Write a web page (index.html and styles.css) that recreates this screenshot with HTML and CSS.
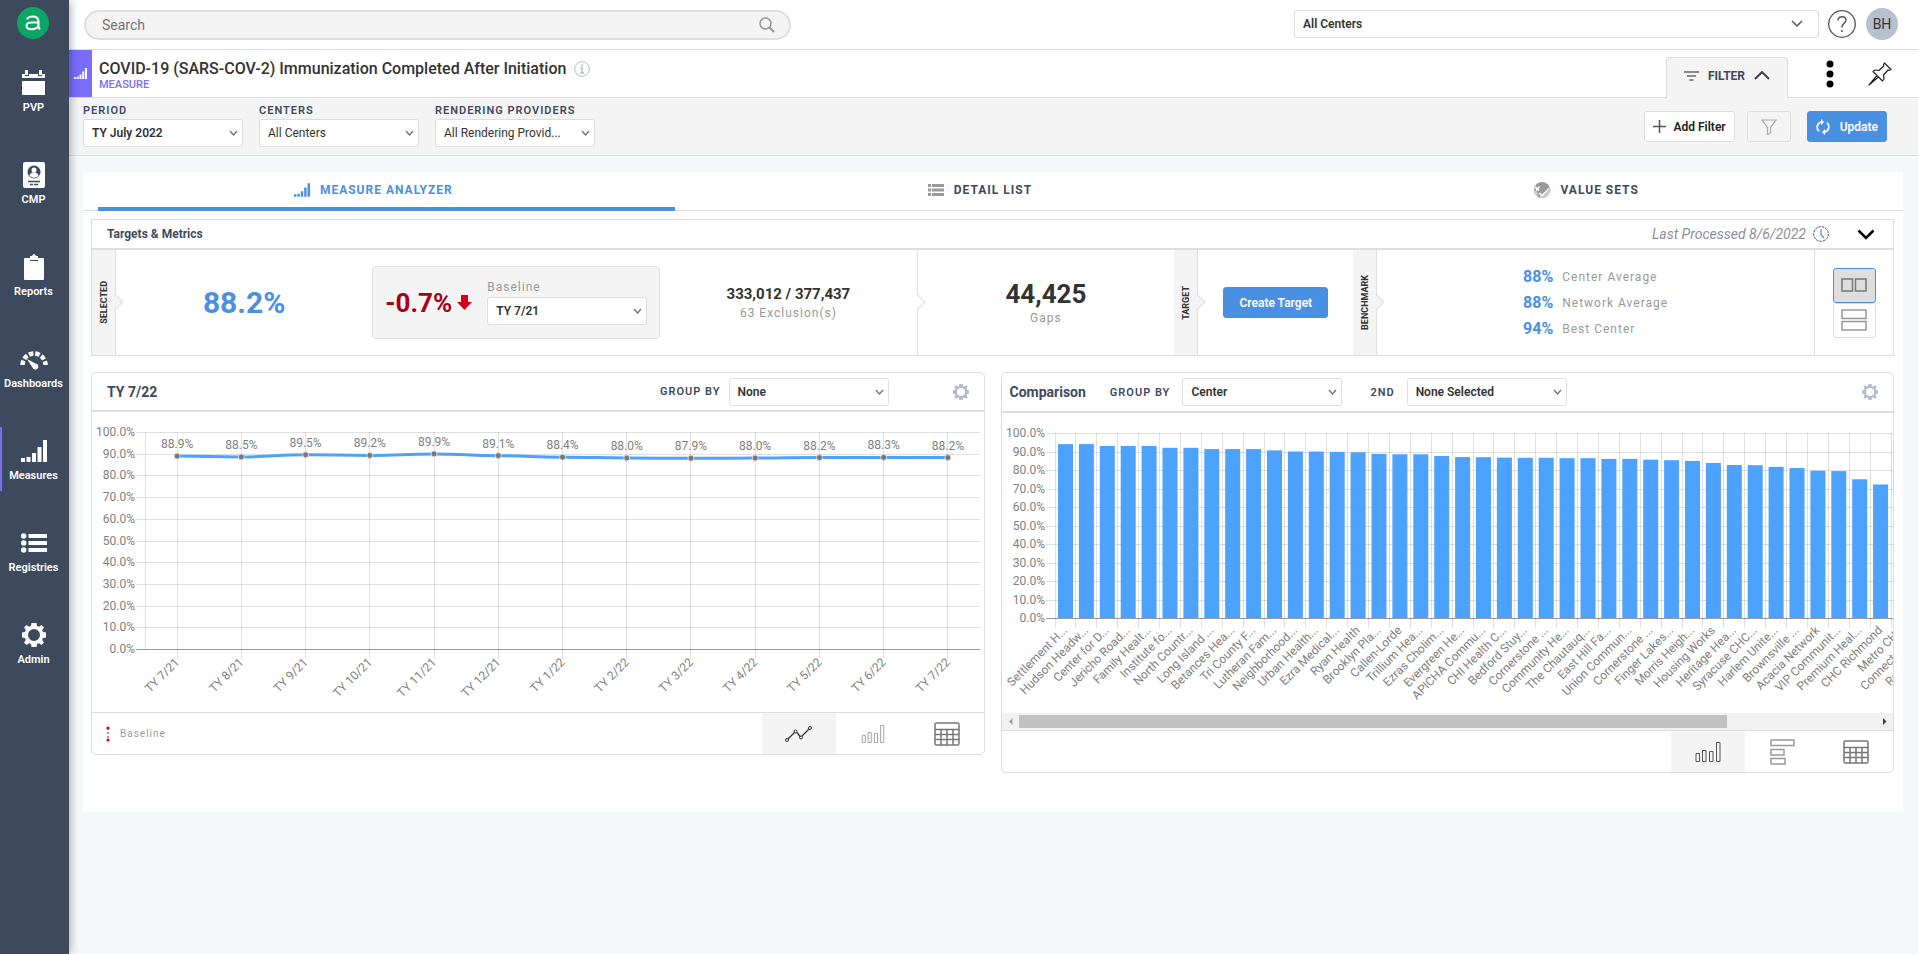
FILE: index.html
```html
<!DOCTYPE html>
<html lang="en">
    <head>
        <meta charset="utf-8">
        <title>COVID-19 (SARS-COV-2) Immunization Completed After Initiation</title>
        <link rel="stylesheet" href="styles.css">
    </head>
    <body>
        <svg class="defs" width="0" height="0" aria-hidden="true">
            <symbol id="bars" viewBox="0 0 26 22">
                <path d="M0 18h4v4H0zM5.500 17h4v5h-4zM11 13h4v9h-4zM16.500 7h4v15h-4zM22 0h4v22h-4z" fill="currentColor"/>
            </symbol>
            <symbol id="gear" viewBox="0 0 24 24">
                <path fill="currentColor" fill-rule="evenodd" d="M9.500 0h5l.5 3 2 .8L19.500 2 22 4.500 20.200 7l.8 2 3 .5v5l-3 .5-.8 2 1.800 2.500-2.500 2.500-2.500-1.800-2 .8-.5 3h-5L9 21l-2-.8L4.500 22 2 19.500 3.800 17 3 15l-3-.5v-5L3 9l.8-2L2 4.500 4.500 2 7 3.800 9 3zM12 6a6 6 0 1 0 0 12 6 6 0 0 0 0-12z"/>
            </symbol>
            <symbol id="outline-bars" viewBox="0 0 26 20">
                <path d="M1 11.500h3.500v8H1zM7.500 8.500H11v11H7.500zM14.500 9.500H18v10h-3.500zM21.500 .5H25v19h-3.500z" fill="none" stroke="currentColor"/>
            </symbol>
            <symbol id="table" viewBox="0 0 26 24">
                <path d="M2.500 1h21q1.500 0 1.500 1.500v19q0 1.500-1.500 1.500h-21Q1 23 1 21.500v-19Q1 1 2.500 1zM1 7.500h24M1 12.500h24M1 17.500h24M7 7.500V23M13 7.500V23M19 7.500V23" fill="none" stroke="currentColor" stroke-width="1.500"/>
            </symbol>
        </svg>

        <nav class="sidebar">
            <a href="#" class="logo" aria-label="Home">
                <svg width="32" height="32" viewBox="0 0 32 32">
                    <circle cx="16" cy="16" r="16" fill="#0ba566"/>
                    <path d="M10 12.500c.8-2 2.800-3 5.500-3 4 0 6 1.600 6 4.800v5.200c0 1.500.6 2.300 1.800 2.500M21.500 15.500h-7c-3.300 0-5 1.200-5 3.300s1.700 3.400 4.700 3.400c4.300 0 7.300-2 7.300-5" fill="none" stroke="#fff" stroke-width="2"/>
                </svg>
            </a>
            <a href="#" class="nav-item">
                <svg width="24" height="28" viewBox="0 0 24 28"><path d="M0 12h23v14H0zM0 5h3v2h4V5h9v2h4V5h3v4H0zM3 1h3v5H3zM17 1h3v5h-3z" fill="#fff"/></svg>
                <span>PVP</span>
            </a>
            <a href="#" class="nav-item">
                <svg width="22" height="28" viewBox="0 0 22 28"><rect y="1" width="22" height="26" rx="2" fill="#fff"/><circle cx="11" cy="11" r="6.500" fill="#3d4a5d"/><circle cx="11" cy="9" r="2.500" fill="#fff"/><path d="M6.500 15c.5-5 8.500-5 9 0q-4.500 3.500-9 0z" fill="#fff"/><path d="M5 20.500h12M7 23.500h3m1 0h4" stroke="#3d4a5d" stroke-width="1.500"/></svg>
                <span>CMP</span>
            </a>
            <a href="#" class="nav-item">
                <svg width="20" height="28" viewBox="0 0 20 28"><path d="M1 5h5v3h8V5h5q1 0 1 1v20q0 1-1 1H1q-1 0-1-1V6q0-1 1-1z" fill="#fff"/><path d="M6 3h2q2-4 4 0h2v4H6z" fill="#fff"/></svg>
                <span>Reports</span>
            </a>
            <a href="#" class="nav-item">
                <svg width="28" height="28" viewBox="0 0 28 28"><path d="M2.500 20a11.500 11.500 0 0 1 23 0" fill="none" stroke="#fff" stroke-width="4.500" stroke-dasharray="4.500 1.900"/><path d="M7 14l8.500 4.500a3 3 0 1 1-3 4z" fill="#fff"/></svg>
                <span>Dashboards</span>
            </a>
            <a href="#" class="nav-item active">
                <svg width="26" height="22"><use href="#bars"/></svg>
                <span>Measures</span>
            </a>
            <a href="#" class="nav-item">
                <svg width="26" height="20" viewBox="0 0 26 20"><path d="M7.500 1H26v4H7.500zM7.500 8H26v4H7.500zM7.500 15H26v4H7.500z" fill="#fff"/><circle cx="2.700" cy="3" r="2.700" fill="#fff"/><circle cx="2.700" cy="10" r="2.700" fill="#fff"/><circle cx="2.700" cy="17" r="2.700" fill="#fff"/></svg>
                <span>Registries</span>
            </a>
            <a href="#" class="nav-item">
                <svg width="24" height="24"><use href="#gear"/></svg>
                <span>Admin</span>
            </a>
        </nav>

        <div class="page">
            <header class="topbar">
                <div class="search">
                    <input type="text" placeholder="Search" aria-label="Search">
                    <svg width="16" height="16" viewBox="0 0 16 16"><circle cx="6.500" cy="6.500" r="5.500" fill="none" stroke="#999" stroke-width="1.500"/><path d="M10.500 10.500L15 15" stroke="#999" stroke-width="2"/></svg>
                </div>
                <div class="account">
                    <select class="center-select" aria-label="Center"><option>All Centers</option></select>
                    <button class="help" aria-label="Help">
                        <svg width="28" height="28" viewBox="0 0 28 28"><circle cx="14" cy="14" r="13.300" fill="none" stroke="#555" stroke-width="1.300"/><path d="M10 10.500c0-5 8-5 8-.5 0 3-4 3.500-4 7v.5M14 20v2" fill="none" stroke="#555" stroke-width="1.500"/></svg>
                    </button>
                    <button class="avatar">BH</button>
                </div>
            </header>

            <div class="titlebar">
                <div class="badge"><svg width="13" height="11"><use href="#bars"/></svg></div>
                <div class="title">
                    <h1>COVID-19 (SARS-COV-2) Immunization Completed After Initiation
                        <svg width="16" height="16" viewBox="0 0 16 16"><circle cx="8" cy="8" r="7.300" fill="none" stroke="#b3bccb"/><path d="M8 3.500v2M6.500 7H8v5M6 12h4" fill="none" stroke="#b3bccb" stroke-width="1.500"/></svg>
                    </h1>
                    <span class="kind">MEASURE</span>
                </div>
                <button class="filter-tab">
                    <svg width="15" height="10" viewBox="0 0 15 10"><path d="M0 1h15M3 5h9M5.500 9h4" stroke="#666" stroke-width="1.500"/></svg>
                    FILTER
                    <svg width="16" height="9" viewBox="0 0 16 9"><path d="M1 8l7-7 7 7" fill="none" stroke="#444" stroke-width="2"/></svg>
                </button>
                <button class="icon-btn" aria-label="More">
                    <svg width="8" height="28" viewBox="0 0 8 28"><circle cx="4" cy="4" r="3.500"/><circle cx="4" cy="14" r="3.500"/><circle cx="4" cy="24" r="3.500"/></svg>
                </button>
                <button class="icon-btn" aria-label="Pin">
                    <svg width="24" height="24" viewBox="0 0 24 24" fill="none" stroke="#222" stroke-width="1.200" stroke-linejoin="round"><path d="M16.500 1l6.500 6.500-2 1-1-.5-4.500 5 .5 4-1.500 2L5 9.500l2-1.500 4 .5 4.800-4.500-.3-1.500zM9 13.500L1 23l9.500-8"/></svg>
                </button>
            </div>

            <form class="filters">
                <div class="field">
                    <label for="period">PERIOD</label>
                    <select id="period" class="strong"><option>TY July 2022</option></select>
                </div>
                <div class="field">
                    <label for="centers">CENTERS</label>
                    <select id="centers"><option>All Centers</option></select>
                </div>
                <div class="field">
                    <label for="providers">RENDERING PROVIDERS</label>
                    <select id="providers"><option>All Rendering Provid...</option></select>
                </div>
                <div class="filter-actions">
                    <button type="button" class="btn">
                        <svg width="13" height="13" viewBox="0 0 13 13"><path d="M6.500 0v13M0 6.500h13" stroke="#555" stroke-width="1.500"/></svg>
                        Add Filter
                    </button>
                    <button type="button" class="btn ghost" aria-label="Saved filters">
                        <svg width="16" height="16" viewBox="0 0 16 16"><path d="M1 1h14L9.500 8.500V14l-3 1.500v-7z" fill="none" stroke="#aaa" stroke-width="1.200"/></svg>
                    </button>
                    <button type="button" class="btn primary">
                        <svg width="14" height="16" viewBox="0 0 14 16" fill="none" stroke="#fff" stroke-width="1.700"><path d="M9 13a5.500 5.500 0 0 0 2-9.300M5 3a5.500 5.500 0 0 0-2 9.300"/><path d="M5 0l3 3-3 3zM9 10l-3 3 3 3z" fill="#fff" stroke="none"/></svg>
                        Update
                    </button>
                </div>
            </form>

            <main class="content">
                <div class="tabs">
                    <button class="tab selected">
                        <svg width="16" height="14"><use href="#bars"/></svg>
                        MEASURE ANALYZER
                    </button>
                    <button class="tab">
                        <svg width="16" height="12" viewBox="0 0 16 12" fill="#999"><path d="M0 0h3v3H0zM4 0h12v3H4zM0 4.500h3v3H0zM4 4.500h12v3H4zM0 9h3v3H0zM4 9h12v3H4z"/></svg>
                        DETAIL LIST
                    </button>
                    <button class="tab">
                        <svg width="16" height="16" viewBox="0 0 16 16"><circle cx="8" cy="8" r="8" fill="#999"/><path d="M0 8.500l3 1 1.500 5.800A8 8 0 0 1 0 8.500zM6 11l3 2.500 6.800-6.500A8 8 0 0 1 6 15.700z" fill="#ccc"/><path d="M1 5l4 3.500M5.500 4.500L2 8.500M5 11l3 2.500 7-7" stroke="#fff" stroke-width="1.500" fill="none"/></svg>
                        VALUE SETS
                    </button>
                </div>

                <section class="metrics">
                    <div class="metrics-head">
                        <h2>Targets &amp; Metrics</h2>
                        <span class="processed">Last Processed 8/6/2022
                            <svg width="16" height="16" viewBox="0 0 16 16" fill="none"><circle cx="8" cy="8" r="7.300" stroke="#3d4a5d" stroke-dasharray="2.500 1"/><path d="M8 3v5.500l3 3.500" stroke="#4a90e2" stroke-width="1.200"/></svg>
                        </span>
                        <button class="icon-btn" aria-label="Collapse">
                            <svg width="18" height="11" viewBox="0 0 18 11"><path d="M1.500 1.500L9 9l7.500-7.500" fill="none" stroke="#000" stroke-width="2.500"/></svg>
                        </button>
                    </div>
                    <div class="metrics-row">
                        <div class="strip"><span>SELECTED</span></div>
                        <div class="result">
                            <div class="cell"><strong class="rate">88.2%</strong></div>
                            <div class="delta">
                                <strong>-0.7%</strong>
                                <svg width="15" height="16" viewBox="0 0 15 16"><path d="M4 0h7v7h4l-7.500 8L0 7h4z" fill="#d0021b"/></svg>
                                <div class="delta-field">
                                    <label for="baseline">Baseline</label>
                                    <select id="baseline" class="strong"><option>TY 7/21</option></select>
                                </div>
                            </div>
                            <div class="cell">
                                <strong class="ratio">333,012 / 377,437</strong>
                                <span class="muted">63 Exclusion(s)</span>
                            </div>
                        </div>
                        <div class="cell gaps">
                            <strong>44,425</strong>
                            <span class="muted">Gaps</span>
                        </div>
                        <div class="strip"><span>TARGET</span></div>
                        <div class="cell target"><button class="btn primary">Create Target</button></div>
                        <div class="strip"><span>BENCHMARK</span></div>
                        <div class="cell benchmark">
                            <dl>
                                <dt>88%</dt><dd>Center Average</dd>
                                <dt>88%</dt><dd>Network Average</dd>
                                <dt>94%</dt><dd>Best Center</dd>
                            </dl>
                        </div>
                        <div class="layout-toggle">
                            <button class="on" aria-label="Side by side"><svg width="26" height="14" viewBox="0 0 26 14"><path d="M1 1h10.500v12H1zM14.500 1H25v12H14.500z" fill="none" stroke="#777" stroke-width="1.500"/></svg></button>
                            <button aria-label="Stacked"><svg width="26" height="22" viewBox="0 0 26 22"><path d="M1 1h24v8.500H1zM1 12.500h24V21H1z" fill="none" stroke="#999" stroke-width="1.500"/></svg></button>
                        </div>
                    </div>
                </section>

                <div class="panels">
                    <section class="panel">
                        <div class="panel-head">
                            <h2>TY 7/22</h2>
                            <label for="group-left" class="push">GROUP BY</label>
                            <select id="group-left" class="strong"><option>None</option></select>
                            <button class="icon-btn settings trend-settings" aria-label="Settings"><svg width="16" height="16"><use href="#gear"/></svg></button>
                        </div>
                        <div class="chart" id="trend"></div>
                        <div class="panel-foot">
                            <span class="legend"><svg width="4" height="16" viewBox="0 0 4 16"><path d="M2 2v12" stroke="#d0021b" stroke-dasharray="2 2"/><circle cx="2" cy="2" r="1.600" fill="#d0021b"/><circle cx="2" cy="14" r="1.600" fill="#d0021b"/></svg>Baseline</span>
                            <button class="view on" aria-label="Line chart"><svg width="27" height="16" viewBox="0 0 27 16" fill="none" stroke="#333"><path d="M3 13l7-7M12 6.500l3 4M17 10l7-7" stroke-width="1.300"/><circle cx="2" cy="14" r="1.500"/><circle cx="10.500" cy="5.500" r="1.500"/><circle cx="16" cy="11.500" r="1.500"/><circle cx="25" cy="2" r="1.500"/></svg></button>
                            <button class="view" aria-label="Bar chart"><svg width="26" height="18"><use href="#outline-bars"/></svg></button>
                            <button class="view dark" aria-label="Table"><svg width="26" height="24"><use href="#table"/></svg></button>
                        </div>
                    </section>

                    <section class="panel comparison">
                        <div class="panel-head">
                            <h2>Comparison</h2>
                            <label for="group-right">GROUP BY</label>
                            <select id="group-right" class="strong"><option>Center</option></select>
                            <label for="second" class="second">2ND</label>
                            <select id="second" class="strong"><option>None Selected</option></select>
                            <button class="icon-btn settings" aria-label="Settings"><svg width="16" height="16"><use href="#gear"/></svg></button>
                        </div>
                        <div class="chart" id="comparison"></div>
                        <div class="scrollbar">
                            <svg width="17" height="17" viewBox="0 0 17 17"><path d="M10.500 5v7L7 8.500z" fill="#a3a3a3"/></svg>
                            <div class="track"><div class="thumb"></div></div>
                            <svg width="17" height="17" viewBox="0 0 17 17"><path d="M7 5v7l3.500-3.500z" fill="#404040"/></svg>
                        </div>
                        <div class="panel-foot">
                            <button class="view on" aria-label="Bar chart"><svg width="26" height="20"><use href="#outline-bars"/></svg></button>
                            <button class="view" aria-label="Horizontal bars"><svg width="25" height="26" viewBox="0 0 25 26"><path d="M1 1h23v5.500H1zM1 10.500h13v5.500H1zM1 19.500h14v5.500H1z" fill="none" stroke="currentColor" stroke-width="1.500"/></svg></button>
                            <button class="view dark" aria-label="Table"><svg width="26" height="24"><use href="#table"/></svg></button>
                        </div>
                    </section>
                </div>
            </main>
        </div>
        <script src="script.js"></script>
    </body>
</html>
```
FILE: styles.css
```css
* {
    box-sizing: border-box;
}
body {
    margin: 0;
    min-height: 100vh;
    display: flex;
    background: #f4f8fb;
    color: #333;
    font-family: Roboto, "Liberation Sans", sans-serif;
    font-size: 13px;
}
button, input, select {
    font: inherit;
    color: inherit;
}
button {
    border: 0;
    padding: 0;
    background: none;
    display: flex;
    align-items: center;
    justify-content: center;
    cursor: pointer;
}
h1, h2, dl, dd {
    margin: 0;
}
.defs {
    position: absolute;
}

/* sidebar */
.sidebar {
    flex: none;
    width: 69px;
    padding-top: 7px;
    background: #3d4a5d;
    box-shadow: 0 0 10px rgba(0, 0, 0, 0.4);
    display: flex;
    flex-direction: column;
    align-items: center;
    gap: 28px;
    z-index: 1;
}
.logo {
    height: 24px;
    padding-right: 3px;
}
.nav-item {
    width: 100%;
    height: 64px;
    padding-top: 10px;
    border-left: 2px solid transparent;
    padding-right: 4px;
    display: grid;
    grid-template-rows: 28px 20px;
    place-items: center;
    align-content: start;
    color: #fff;
    font-size: 11px;
    font-weight: 600;
    text-decoration: none;
}
.nav-item.active {
    border-left-color: #7a6cff;
}

.page {
    flex: 1;
    min-width: 0;
}

/* top bar */
.topbar {
    height: 50px;
    padding: 0 20px 2px 15px;
    display: flex;
    align-items: center;
    justify-content: space-between;
    background: #fff;
    border-bottom: 1px solid #ddd;
}
.search {
    width: 39%;
    height: 30px;
    margin-top: 3px;
    padding: 0 14px 0 16px;
    display: flex;
    align-items: center;
    border: 2px solid #ddd;
    border-radius: 15px;
    background: #f4f4f4;
}
.search input {
    flex: 1;
    border: 0;
    padding: 0;
    background: none;
    outline: 0;
    font-size: 14px;
}
.search input::placeholder {
    color: #757575;
}
.account {
    flex: 0 1 604px;
    display: flex;
    align-items: center;
}
select {
    appearance: none;
    width: 160px;
    height: 28px;
    padding: 0 20px 0 8px;
    border: 1px solid #ddd;
    border-radius: 3px;
    background: #fff url("data:image/svg+xml,%3Csvg xmlns='http://www.w3.org/2000/svg' width='9' height='6'%3E%3Cpath d='M1 1l3.500 4L8 1' fill='none' stroke='%23777' stroke-width='1.400'/%3E%3C/svg%3E") no-repeat right 4px center;
    color: #333;
    font-size: 12px;
}
select.strong {
    font-weight: 600;
}
.center-select {
    flex: 1;
    background-image: url("data:image/svg+xml,%3Csvg xmlns='http://www.w3.org/2000/svg' width='12' height='8'%3E%3Cpath d='M1 1l5 5 5-5' fill='none' stroke='%23555' stroke-width='1.500'/%3E%3C/svg%3E");
    background-position: right 15px center;
    font-weight: 600;
}
.help {
    margin: 0 10px 0 9px;
}
.avatar {
    width: 32px;
    height: 32px;
    border-radius: 50%;
    background: #b7c0ce;
    font-size: 14px;
}

/* title bar */
.titlebar {
    height: 48px;
    padding-right: 26px;
    display: flex;
    background: #fff;
    border-bottom: 1px solid #ddd;
}
.badge {
    width: 23px;
    display: grid;
    place-items: center;
    background: #7a6cff;
    color: #fff;
}
.title {
    flex: 1;
    padding: 9px 0 0 7px;
}
h1 {
    display: flex;
    align-items: center;
    gap: 8px;
    font-size: 16px;
    line-height: 20px;
    font-weight: 500;
}
.kind {
    display: block;
    font-size: 11px;
    line-height: 12px;
    font-weight: 500;
    color: #7a6cff;
}
.filter-tab {
    width: 122px;
    height: 41px;
    margin: 7px 38px 0 0;
    padding-bottom: 5px;
    gap: 9px;
    border: 1px solid #ddd;
    border-bottom: 0;
    border-radius: 4px 4px 0 0;
    background: #f4f4f4;
    color: #3d4a5d;
    font-size: 12px;
    font-weight: 700;
}
.titlebar .icon-btn + .icon-btn {
    margin-left: 34px;
}

/* filters */
.filters {
    height: 58px;
    padding: 5px 31px 0 14px;
    display: flex;
    gap: 16px;
    background: #f4f4f4;
    border-bottom: 1px solid #ddd;
}
.field {
    width: 160px;
}
label {
    color: #3d4a5d;
    font-size: 11px;
    font-weight: 600;
    letter-spacing: 1px;
    white-space: nowrap;
}
.field label {
    display: block;
    line-height: 16px;
}
.filter-actions {
    margin: 8px 0 0 auto;
    display: flex;
    gap: 12px;
}
.btn {
    height: 31px;
    padding: 0 8px;
    gap: 8px;
    border: 1px solid #ddd;
    border-radius: 3px;
    background: #fff;
    font-size: 12px;
    font-weight: 600;
    color: #222;
}
.btn.ghost {
    width: 44px;
    margin-right: 4px;
    background: none;
}
.btn.primary {
    border-color: #4a90e2;
    background: #4a90e2;
    color: #fff;
}
.btn.primary svg {
    margin-right: 2px;
}
.target .btn {
    padding: 0 15px;
}

/* content card */
.content {
    margin: 16px 15px 0 14px;
    padding-bottom: 39px;
    background: #fff;
}
.tabs {
    height: 39px;
    display: grid;
    grid-template-columns: repeat(3, 1fr);
    border-bottom: 1px solid #dfe0e6;
}
.tab {
    height: 39px;
    gap: 10px;
    margin: 0 15px;
    padding-right: 26px;
    border-bottom: 4px solid transparent;
    color: #3d4a5d;
    font-size: 12px;
    font-weight: 700;
    letter-spacing: 1px;
}
.tab.selected {
    border-bottom-color: #4a90e2;
    color: #4a90e2;
}

/* metrics */
.metrics {
    margin: 8px 9px 16px 8px;
    border: 1px solid #ddd;
}
.metrics-head {
    height: 30px;
    padding: 0 18px 0 15px;
    display: flex;
    align-items: center;
    border-bottom: 2px solid #ddd;
}
h2 {
    color: #3d4a5d;
    font-size: 12px;
    font-weight: 700;
}
.processed {
    margin: 0 28px 0 auto;
    display: flex;
    align-items: center;
    gap: 7px;
    color: #8a8f99;
    font-size: 14px;
    font-style: italic;
}
.metrics-row {
    height: 105px;
    display: flex;
}
.strip {
    position: relative;
    flex: none;
    width: 24px;
    display: grid;
    place-items: center;
    border-right: 1px solid #ddd;
    background: #f4f4f4;
    font-size: 9px;
    font-weight: 700;
}
.strip span {
    writing-mode: vertical-rl;
    rotate: 180deg;
}
.strip::after, .result::after {
    content: "";
    position: absolute;
    top: 46px;
    right: -6px;
    width: 11px;
    height: 11px;
    border: 1px solid #ddd;
    border-width: 1px 1px 0 0;
    background: #f4f4f4;
    rotate: 45deg;
}
.result::after {
    background: #fff;
}
.result {
    position: relative;
    flex: 801;
    display: flex;
    align-items: center;
    border-right: 1px solid #ddd;
}
.cell {
    flex: 1;
    display: flex;
    flex-direction: column;
    align-items: center;
    justify-content: center;
    gap: 3px;
}
.gaps {
    flex: 257;
}
.target {
    flex: 155;
}
.benchmark {
    flex: 437;
}
.rate {
    color: #4a90e2;
    font-size: 30px;
}
.delta {
    width: 288px;
    height: 73px;
    padding: 0 12px;
    display: flex;
    align-items: center;
    gap: 5px;
    border: 1px solid #ddd;
    border-radius: 4px;
    background: #f4f4f4;
}
.delta strong {
    color: #a50016;
    font-size: 26px;
}
.delta-field {
    margin-left: auto;
    display: grid;
    gap: 3px;
}
.delta-field label, .muted, dd {
    color: #999;
    font-size: 12px;
    font-weight: 400;
    letter-spacing: 1px;
}
.ratio {
    font-size: 15px;
}
.gaps strong {
    font-size: 26px;
    line-height: 28px;
}
dl {
    display: grid;
    grid-template-columns: auto auto;
    gap: 0 9px;
    align-items: center;
    line-height: 26px;
}
dt {
    color: #4a90e2;
    font-size: 16px;
    font-weight: 700;
}
.layout-toggle {
    width: 79px;
    display: flex;
    flex-direction: column;
    align-items: center;
    justify-content: center;
    border-left: 1px solid #ddd;
}
.layout-toggle button {
    width: 43px;
    height: 35px;
    border: 1px solid #ddd;
    border-radius: 3px;
}
.layout-toggle .on {
    border-color: #4a90e2;
    background: #dedede;
}

/* chart panels */
.panels {
    margin: 0 9px 0 8px;
    display: grid;
    grid-template-columns: 1fr 1fr;
    align-items: start;
    gap: 16px;
}
.panel {
    min-width: 0;
    border: 1px solid #ddd;
    border-radius: 5px;
}
.panel-head {
    height: 39px;
    padding: 0 15px;
    display: flex;
    align-items: center;
    border-bottom: 2px solid #ddd;
}
.comparison .panel-head {
    height: 40px;
    padding-left: 8px;
}
.panel-head h2 {
    font-size: 14px;
}
.panel-head label {
    margin: 0 12px 0 24px;
}
.panel-head label.push {
    margin: 0 8px 0 auto;
}
.panel-head label.second {
    margin-left: 28px;
}
.panel-head .settings {
    margin-left: auto;
    color: #b3bccb;
}
.panel-head .trend-settings {
    margin-left: 64px;
}
.chart {
    height: 300px;
    overflow: hidden;
}
.chart svg {
    display: block;
}
.chart text {
    fill: #808080;
    font-size: 12px;
}
.chart .grid {
    stroke: #000;
    stroke-opacity: 0.12;
    shape-rendering: crispEdges;
}
.chart .axis {
    stroke: #999;
    shape-rendering: crispEdges;
}
.chart .line {
    fill: none;
    stroke: #4da1ff;
    stroke-width: 3px;
}
.chart .dot {
    fill: #777;
    stroke: #ddd;
}
.chart .bar {
    fill: #4da1ff;
}
.scrollbar {
    height: 17px;
    display: flex;
    background: #f1f1f1;
}
.track {
    flex: 1;
    padding: 2px 0;
}
.thumb {
    width: 82.600%;
    height: 100%;
    background: #c1c1c1;
}
.panel-foot {
    height: 42px;
    display: flex;
    justify-content: flex-end;
    border-top: 1px solid #ddd;
}
.legend {
    margin: 0 auto 0 14px;
    display: flex;
    align-items: center;
    gap: 10px;
    color: #999;
    font-size: 10px;
    letter-spacing: 1px;
}
.view {
    width: 74px;
    color: #999;
}
.view.on {
    background: #f4f4f4;
    color: #555;
}
.view.dark {
    color: #777;
}
```
FILE: script.js
```js
const NS = 'http://www.w3.org/2000/svg';

const trend = [
    ['TY 7/21', 88.9], ['TY 8/21', 88.5], ['TY 9/21', 89.5], ['TY 10/21', 89.2],
    ['TY 11/21', 89.9], ['TY 12/21', 89.1], ['TY 1/22', 88.4], ['TY 2/22', 88.0],
    ['TY 3/22', 87.9], ['TY 4/22', 88.0], ['TY 5/22', 88.2], ['TY 6/22', 88.3], ['TY 7/22', 88.2]
];

const centers = [
    ['Settlement H...', 94], ['Hudson Headw...', 94], ['Center for D...', 93], ['Jericho Road...', 93],
    ['Family Healt...', 93], ['Institute fo...', 92], ['North Countr...', 92], ['Long Island ...', 91.3],
    ['Betances Hea...', 91.3], ['Tri County F...', 91.3], ['Lutheran Fam...', 90.6], ['Neighborhood...', 90],
    ['Urban Health...', 90], ['Ezra Medical...', 89.8], ['Ryan Health', 89.6], ['Brooklyn Pla...', 88.7],
    ['Callen-Lorde', 88.5], ['Trillium Hea...', 88.5], ['Ezras Cholim...', 87.6], ['Evergreen He...', 87],
    ['APICHA Commu...', 86.9], ['CHI Health C...', 86.7], ['Bedford Stuy...', 86.6], ['Cornerstone ...', 86.6],
    ['Community He...', 86.4], ['The Chautauq...', 86.4], ['East Hill Fa...', 86], ['Union Commun...', 86],
    ['Cornerstone ...', 85.6], ['Finger Lakes...', 85.3], ['Morris Heigh...', 84.9], ['Housing Works', 83.8],
    ['Heritage Hea...', 82.7], ['Syracuse CHC...', 82.6], ['Harlem Unite...', 81.7], ['Brownsville ...', 81.1],
    ['Acacia Network', 79.6], ['VIP Communit...', 79.4], ['Premium Heal...', 75], ['CHC Richmond', 72.2],
    ['Metro CHC', 70], ['Connected Ca...', 69], ['Refuah Healt...', 68]
];

function add(parent, tag, attrs, text) {
    const el = document.createElementNS(NS, tag);
    for (const key in attrs) {
        el.setAttribute(key, attrs[key]);
    }
    if (text) {
        el.textContent = text;
    }
    parent.appendChild(el);
    return el;
}

function line(svg, x1, y1, x2, y2, cls) {
    add(svg, 'line', { x1, y1, x2, y2, class: cls || 'grid' });
}

// horizontal grid with the percentage scale on the left
function drawScale(svg, left, right, top, bottom) {
    for (let i = 0; i <= 10; i++) {
        const y = Math.round(bottom - (bottom - top) * i / 10);
        line(svg, left - 9, y, right, y, i ? 'grid' : 'axis');
        add(svg, 'text', { x: left - 10, y: y + 4, 'text-anchor': 'end' }, (i * 10).toFixed(1) + '%');
    }
}

function drawLabel(svg, x, y, text) {
    add(svg, 'text', { x, y, 'text-anchor': 'end', transform: `rotate(-45 ${x} ${y})` }, text);
}

function drawTrend() {
    const box = document.querySelector('#trend');
    box.innerHTML = '';
    const width = box.clientWidth;
    const left = 53, right = width - 4, top = 20, bottom = 237;
    const svg = add(box, 'svg', { width, height: 300 });
    const step = (right - left) / trend.length;

    drawScale(svg, left, right, top, bottom);
    line(svg, left, top, left, bottom);

    const points = trend.map(([name, value], i) => ({
        name, value,
        x: left + step * (i + 0.5),
        y: bottom - (bottom - top) * value / 100
    }));
    let d = '';
    points.forEach((p, i) => {
        line(svg, p.x, top, p.x, bottom + 10);
        const prev = points[i - 1];
        d += i ? `C${prev.x + step / 2} ${prev.y} ${p.x - step / 2} ${p.y} ${p.x} ${p.y}` : `M${p.x} ${p.y}`;
    });
    add(svg, 'path', { d, class: 'line' });
    points.forEach(p => {
        add(svg, 'circle', { cx: p.x, cy: p.y, r: 3, class: 'dot' });
        add(svg, 'text', { x: p.x, y: p.y - 8, 'text-anchor': 'middle' }, p.value.toFixed(1) + '%');
        drawLabel(svg, p.x + 3, bottom + 14, p.name);
    });
}

function drawComparison() {
    const box = document.querySelector('#comparison');
    const step = 20.9, left = 53, top = 20, bottom = 205;
    const width = left + step * centers.length;
    const svg = add(box, 'svg', { width, height: 300 });

    drawScale(svg, left, width, top, bottom);
    line(svg, left, top, left, bottom + 10);
    centers.forEach(([name, value], i) => {
        const x = left + step * i;
        const h = (bottom - top) * value / 100;
        line(svg, x + step, top, x + step, bottom + 10);
        add(svg, 'rect', { x: x + 3, y: bottom - h, width: 15, height: h, class: 'bar' });
        drawLabel(svg, x + 13, bottom + 13, name);
    });
}

drawTrend();
drawComparison();
window.addEventListener('resize', drawTrend);
```
